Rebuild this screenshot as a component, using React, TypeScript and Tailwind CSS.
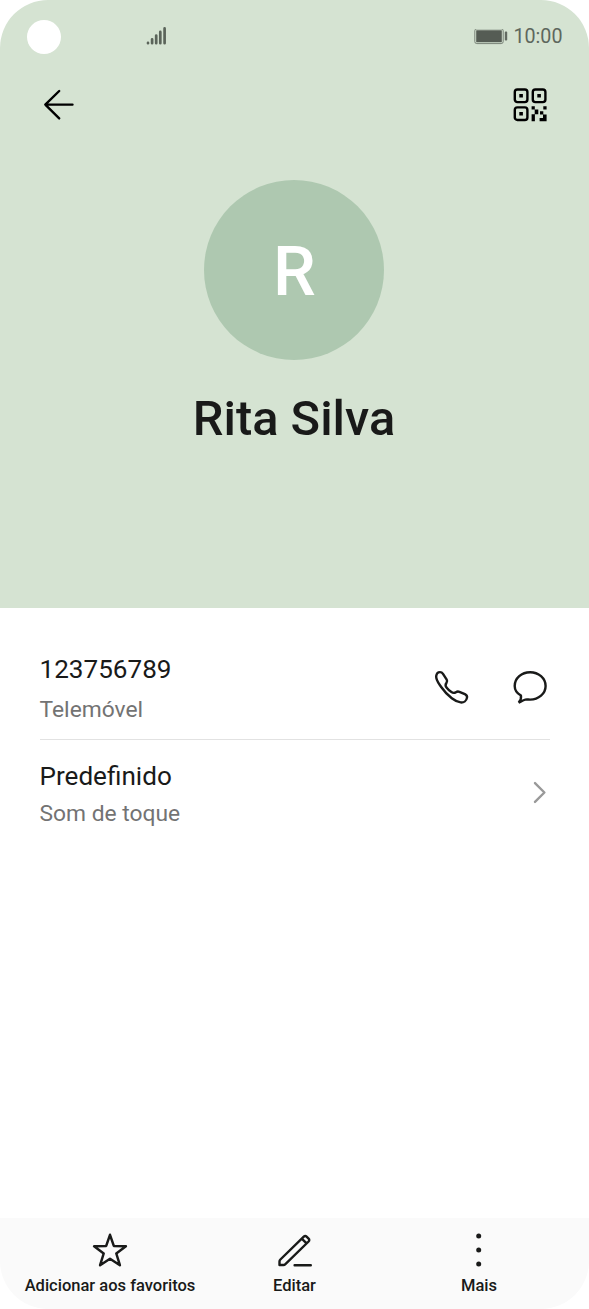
import React from "react";

export default function ContactDetails() {
  return (
    <div className="flex h-[1309px] w-[589px] flex-col overflow-hidden rounded-[48px] bg-white font-['Roboto',sans-serif] text-[#191a19]">
      {/* Contact Header */}
      <header className="h-[608.4px] bg-[#d5e3d2]">
        {/* Status Bar */}
        <div className="flex h-[73px] items-center pr-[26.5px] pl-[26.5px]">
          <div className="size-[34px] rounded-full bg-white" />
          <svg
            className="ml-[84.5px] h-5 w-[22px]"
            viewBox="0 0 22 20"
            fill="none"
            stroke="#5b645a"
            strokeWidth="2.7"
            strokeLinecap="round"
          >
            <path d="M3 15.9v.3M7.1 12.3v3.9M11.2 8.6v7.6M15.3 4.9v11.3M19.6 1.4v14.8" />
          </svg>
          <div className="ml-auto flex items-center gap-[5px]">
            <svg className="h-4 w-[34px]" viewBox="0 0 34 16" fill="none">
              <rect x=".8" y="-.2" width="28.4" height="14.8" rx="2" stroke="#798378" />
              <rect x="2.2" y="1.2" width="25.6" height="12" rx=".5" fill="#555c54" />
              <rect x="30.8" y="2.6" width="2.4" height="9" rx=".8" fill="#626a61" />
            </svg>
            <span className="text-[19.7px] leading-6 text-[#5e675d]">10:00</span>
          </div>
        </div>

        {/* Navigation */}
        <div className="flex h-[64px] items-center justify-between pr-[41px] pl-[43px]">
          <button type="button" aria-label="Voltar">
            <svg
              className="size-8"
              viewBox="0 0 32 32"
              fill="none"
              stroke="#000"
              strokeWidth="2.4"
              strokeLinecap="round"
              strokeLinejoin="round"
            >
              <path d="M16.2 2 2.3 15.6l13.9 13.8M2.3 15.6h27.2" />
            </svg>
          </button>
          <button type="button" aria-label="Código QR">
            <svg className="size-9" viewBox="0 0 36 36" fill="#000">
              <g fill="none" stroke="#000" strokeWidth="2.4">
                <rect x="2.8" y="2.5" width="12.6" height="12.6" rx="2.6" />
                <rect x="20.8" y="2.5" width="12.6" height="12.6" rx="2.6" />
                <rect x="2.8" y="20.4" width="12.6" height="12.6" rx="2.6" />
              </g>
              <path d="M7.3 7h3.6v3.6H7.3zM25.3 7h3.6v3.6h-3.6zM7.3 24.9h3.6v3.6H7.3z" />
              <path d="M19.6 19.3h3.2v3.3h3.5v4.7h-3.4v7h-3.3v-7h3.1v-4.7h-3.1zM31.3 19.3h3.3v3.3h-3.3zM28 24.3h3.3v3.3h3.3v6.7h-7V31h3.4v-3.4h-3z" />
            </svg>
          </button>
        </div>

        {/* Avatar and Name */}
        <div className="flex flex-col items-center pt-[43px] pr-px">
          <div className="flex size-[180px] items-center justify-center rounded-full bg-[#aec8b0] pt-[3px] pl-px text-[68px] font-medium text-white">
            R
          </div>
          <h1 className="mt-[29px] text-[48.8px] leading-[60px] font-medium">Rita Silva</h1>
        </div>
      </header>

      {/* Contact Info */}
      <main className="flex-1 px-[39.5px] pt-[41.6px]">
        <div className="flex h-[90px] justify-between border-b border-[#e2e2e2]">
          <div>
            <p className="pt-[3px] text-[26.1px] leading-[32px]">123756789</p>
            <p className="mt-[11px] text-[22.8px] leading-7 text-[#737373]">Telemóvel</p>
          </div>
          <div className="flex gap-[43px] pt-[19px] pr-[1.5px]">
            <button type="button" aria-label="Ligar" className="size-9">
              <svg
                className="size-9"
                viewBox="0 0 36 36"
                fill="none"
                stroke="currentColor"
                strokeWidth="2.4"
                strokeLinejoin="round"
              >
                <path d="M3.2 7.2C3.5 4.5 5.2 3.1 7 3.1c1.4 0 2.3.7 3 1.8l3.7 5.8c.8 1.3.5 2.1-.2 3.1-1.2 1.6-1.2 3.2 0 4.7 1.4 1.8 3 3.4 4.9 4.6 1.7 1.1 3 1.1 4.5.1 1.2-.8 2.1-1 3.5-.4l5.5 2.4c1.7.8 2.4 1.8 2.1 3.4-.5 3-3.3 5.1-6.3 4.8-3.2-.4-6.1-1.9-8.9-4.1-4.1-3.2-7.7-7.1-10.6-11.3C5.8 14.5 2.8 11.3 3.2 7.2Z" />
              </svg>
            </button>
            <button type="button" aria-label="Mensagem" className="size-9">
              <svg
                className="size-9"
                viewBox="0 0 36 36"
                fill="none"
                stroke="currentColor"
                strokeWidth="2.4"
              >
                <path d="M8.9 26.5C5 24.3 2.7 21 2.7 17 2.7 9.3 9.6 3.2 18.1 3.2S33.6 9.3 33.6 17 26.6 30.6 18.1 30.6c-1.9 0-3.2-.3-4.8 0-2 .4-3.7 1.6-6.6 3 1.9-2.2 2.8-4.5 2.2-7.1Z" />
              </svg>
            </button>
          </div>
        </div>
        <div className="flex justify-between">
          <div className="pt-5">
            <p className="text-[26.1px] leading-[32px]">Predefinido</p>
            <p className="mt-2 text-[22.8px] leading-7 text-[#737373]">Som de toque</p>
          </div>
          <svg
            className="mt-10 mr-[3px] h-6 w-4"
            viewBox="0 0 16 24"
            fill="none"
            stroke="#999"
            strokeWidth="2.4"
            strokeLinecap="round"
            strokeLinejoin="round"
          >
            <path d="M4 3.1 13.4 12.5 4 21.9" />
          </svg>
        </div>
      </main>

      {/* Bottom Actions */}
      <footer className="grid h-[91px] grid-cols-[184px_185px_184px] bg-[#fafafa] pt-[14px] pl-[18px] text-[16.5px] leading-5 font-medium">
        <button type="button" className="flex flex-col items-center gap-2">
          <svg
            className="size-9 shrink-0"
            viewBox="0 0 36 36"
            fill="none"
            stroke="currentColor"
            strokeWidth="2.5"
            strokeLinejoin="round"
          >
            <path d="m18 2.8 3.8 11.1 12.1.4-9.6 7.2 3.6 11.7-9.9-6.5-9.9 6.5 3.6-11.7-9.6-7.2 12.1-.4Z" />
          </svg>
          <span className="whitespace-nowrap">Adicionar aos favoritos</span>
        </button>
        <button type="button" className="flex flex-col items-center gap-2">
          <svg
            className="size-9 shrink-0"
            viewBox="0 0 36 36"
            fill="none"
            stroke="currentColor"
            strokeWidth="2.4"
            strokeLinecap="round"
            strokeLinejoin="round"
          >
            <path d="M2.5 33v-3.5c0-.8.3-1.4.9-2L26.8 4.7c.9-.9 1.9-.9 2.8 0l2 2c.9.9.9 1.9 0 2.8L8.4 32.1c-.6.6-1.2.9-2 .9ZM25 6.8l4.6 4.6M17.6 33.2h16.2" />
          </svg>
          <span>Editar</span>
        </button>
        <button type="button" className="flex flex-col items-center gap-2">
          <svg className="size-9 shrink-0" viewBox="0 0 36 36" fill="currentColor">
            <circle cx="17.7" cy="4" r="2.5" />
            <circle cx="17.7" cy="18" r="2.5" />
            <circle cx="17.7" cy="32" r="2.5" />
          </svg>
          <span>Mais</span>
        </button>
      </footer>
    </div>
  );
}
